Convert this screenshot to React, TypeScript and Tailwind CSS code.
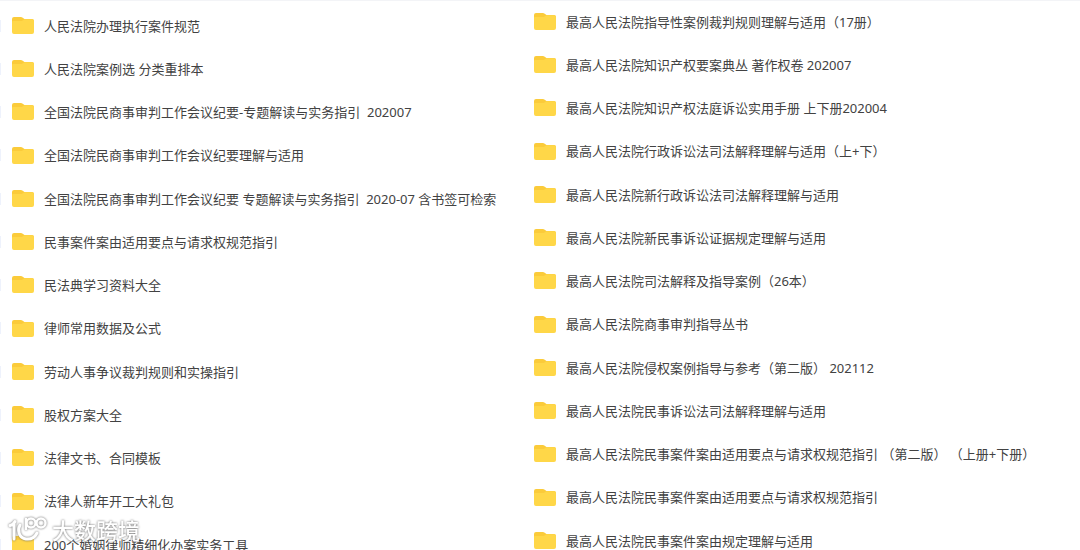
import { clsx } from 'clsx'

const leftFolders = [
  '人民法院办理执行案件规范',
  '人民法院案例选 分类重排本',
  '全国法院民商事审判工作会议纪要-专题解读与实务指引  202007',
  '全国法院民商事审判工作会议纪要理解与适用',
  '全国法院民商事审判工作会议纪要 专题解读与实务指引  2020-07 含书签可检索',
  '民事案件案由适用要点与请求权规范指引',
  '民法典学习资料大全',
  '律师常用数据及公式',
  '劳动人事争议裁判规则和实操指引',
  '股权方案大全',
  '法律文书、合同模板',
  '法律人新年开工大礼包',
  '200个婚姻律师精细化办案实务工具',
]

const rightFolders = [
  '最高人民法院指导性案例裁判规则理解与适用（17册）',
  '最高人民法院知识产权要案典丛 著作权卷 202007',
  '最高人民法院知识产权法庭诉讼实用手册 上下册202004',
  '最高人民法院行政诉讼法司法解释理解与适用（上+下）',
  '最高人民法院新行政诉讼法司法解释理解与适用',
  '最高人民法院新民事诉讼证据规定理解与适用',
  '最高人民法院司法解释及指导案例（26本）',
  '最高人民法院商事审判指导丛书',
  '最高人民法院侵权案例指导与参考（第二版） 202112',
  '最高人民法院民事诉讼法司法解释理解与适用',
  '最高人民法院民事案件案由适用要点与请求权规范指引 （第二版） （上册+下册）',
  '最高人民法院民事案件案由适用要点与请求权规范指引',
  '最高人民法院民事案件案由规定理解与适用',
]

const FolderIcon = () => (
  <svg className="w-[22px] h-[17px] shrink-0" viewBox="0 0 22 17" aria-hidden="true">
    <path d="M0 2a2 2 0 0 1 2-2h7a2 2 0 0 1 1.3.5L12.5 2H20a2 2 0 0 1 2 2v3H0z" fill="#fbcb3a" />
    <path d="M0 5a1 1 0 0 1 1-1h8.5a2 2 0 0 0 1.2-.4l1.3-1a2 2 0 0 1 1.2-.4H20a2 2 0 0 1 2 2V15a2 2 0 0 1-2 2H2a2 2 0 0 1-2-2z" fill="#ffd748" />
  </svg>
)

interface FolderListProps {
  folders: string[]
  label: string
  edge?: boolean
  className?: string
}

const FolderList = ({ folders, label, edge, className }: FolderListProps) => (
  <ul aria-label={label} className={clsx('min-w-0', className)}>
    {folders.map((name) => (
      <li key={name} className="flex h-[43px] items-center nth-[4n]:h-11">
        {/* Right edge of the row's selection box */}
        <span className={clsx('mr-[11px] h-3 w-px', edge && 'bg-[#eef2fc]')} />
        <FolderIcon />
        <span className="ml-2.5 whitespace-pre">{name}</span>
      </li>
    ))}
  </ul>
)

const Watermark = () => (
  <div className="absolute bottom-1.5 left-2 flex items-center gap-1 text-white drop-shadow-[0_0_1px_#666666]">
    <svg className="h-7 w-10" viewBox="0 0 40 28" fill="none" stroke="currentColor" strokeWidth="3" strokeLinecap="round" strokeLinejoin="round" aria-hidden="true">
      <path d="M2 9.5C4.500 9 6 7.500 7 5.500M6 8v15" />
      <path d="M12 9c-3 5-1 13 6 14 5 .6 9-2 11-6" />
      <path d="M18 3v10" strokeWidth="2.5" />
      <circle cx="23" cy="7" r="4.5" strokeWidth="2.5" />
      <circle cx="33" cy="7" r="4.5" strokeWidth="2.5" />
    </svg>
    <span className="text-[22px] leading-7 font-medium">大数跨境</span>
  </div>
)

export default function App() {
  return (
    <main className="relative h-screen overflow-hidden bg-white font-['Noto_Sans','Noto_Sans_CJK_SC',sans-serif] text-[13px] leading-5 text-[#424242] inset-shadow-[0_1px_0_#f3f4f7]">
      <div className="grid grid-cols-[522px_1fr]">
        <FolderList folders={leftFolders} label="左侧文件夹" edge className="pt-1" />
        <FolderList folders={rightFolders} label="右侧文件夹" />
      </div>
      <Watermark />
    </main>
  )
}
